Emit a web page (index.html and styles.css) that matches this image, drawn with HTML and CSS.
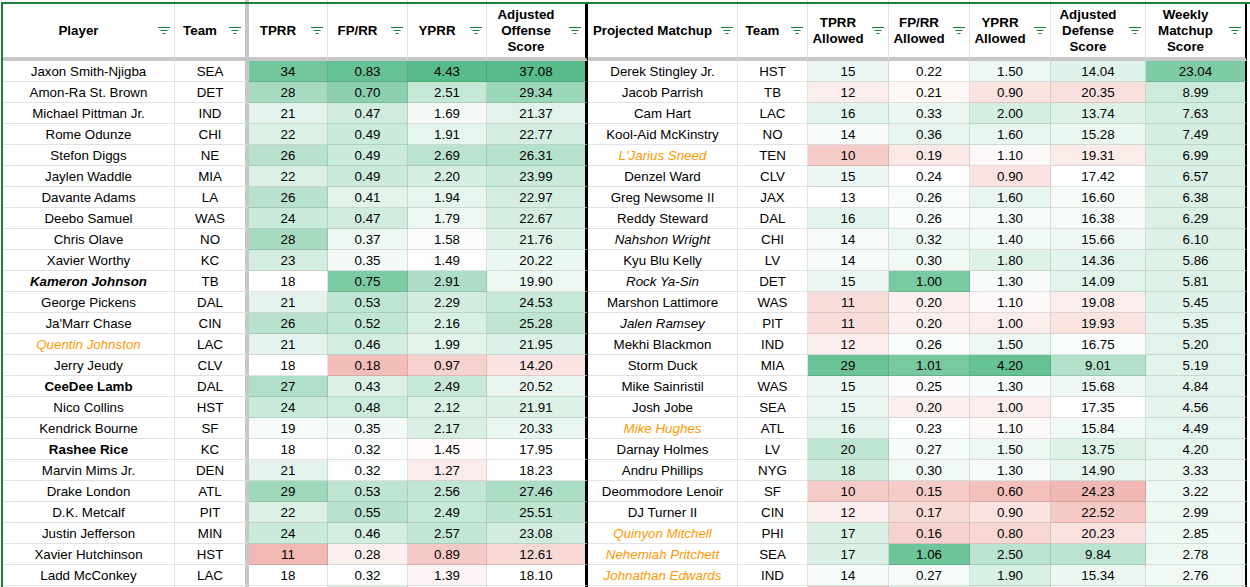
FILE: index.html
```html
<!DOCTYPE html>
<html lang="en">
<head>
<meta charset="utf-8">
<title>Matchups</title>
<link rel="stylesheet" href="styles.css">
</head>
<body>
<svg width="0" height="0" class="defs" aria-hidden="true">
  <symbol id="flt" viewBox="0 0 12 8">
    <path d="M0 0.5H12M2.5 3.5H9.5M4.5 6.5H7.5" stroke="#188038" stroke-width="1" fill="none"/>
  </symbol>
</svg>
<div class="sheet">
  <div class="row stub"><div></div><div></div><div></div><div></div><div></div><div></div><div></div><div></div><div></div><div></div><div></div><div></div><div></div></div>
  <div class="grid">
    <div class="row head">
      <div class="hc"><span class="lbl">Player</span><svg class="fi"><use href="#flt"/></svg></div>
      <div class="hc"><span class="lbl">Team</span><svg class="fi"><use href="#flt"/></svg></div>
      <div class="hc"><span class="lbl">TPRR</span><svg class="fi"><use href="#flt"/></svg></div>
      <div class="hc"><span class="lbl">FP/RR</span><svg class="fi"><use href="#flt"/></svg></div>
      <div class="hc"><span class="lbl">YPRR</span><svg class="fi"><use href="#flt"/></svg></div>
      <div class="hc"><span class="lbl">Adjusted Offense Score</span><svg class="fi"><use href="#flt"/></svg></div>
      <div class="hc"><span class="lbl">Projected Matchup</span><svg class="fi"><use href="#flt"/></svg></div>
      <div class="hc"><span class="lbl">Team</span><svg class="fi"><use href="#flt"/></svg></div>
      <div class="hc"><span class="lbl">TPRR Allowed</span><svg class="fi"><use href="#flt"/></svg></div>
      <div class="hc"><span class="lbl">FP/RR Allowed</span><svg class="fi"><use href="#flt"/></svg></div>
      <div class="hc"><span class="lbl">YPRR Allowed</span><svg class="fi"><use href="#flt"/></svg></div>
      <div class="hc"><span class="lbl">Adjusted Defense Score</span><svg class="fi"><use href="#flt"/></svg></div>
      <div class="hc"><span class="lbl">Weekly Matchup Score</span><svg class="fi"><use href="#flt"/></svg></div>
    </div>

    <div class="row data"><div>Jaxon Smith-Njigba</div><div>SEA</div><div>34</div><div>0.83</div><div>4.43</div><div>37.08</div><div>Derek Stingley Jr.</div><div>HST</div><div>15</div><div>0.22</div><div>1.50</div><div>14.04</div><div>23.04</div></div>
    <div class="row data"><div>Amon-Ra St. Brown</div><div>DET</div><div>28</div><div>0.70</div><div>2.51</div><div>29.34</div><div>Jacob Parrish</div><div>TB</div><div>12</div><div>0.21</div><div>0.90</div><div>20.35</div><div>8.99</div></div>
    <div class="row data"><div>Michael Pittman Jr.</div><div>IND</div><div>21</div><div>0.47</div><div>1.69</div><div>21.37</div><div>Cam Hart</div><div>LAC</div><div>16</div><div>0.33</div><div>2.00</div><div>13.74</div><div>7.63</div></div>
    <div class="row data"><div>Rome Odunze</div><div>CHI</div><div>22</div><div>0.49</div><div>1.91</div><div>22.77</div><div>Kool-Aid McKinstry</div><div>NO</div><div>14</div><div>0.36</div><div>1.60</div><div>15.28</div><div>7.49</div></div>
    <div class="row data"><div>Stefon Diggs</div><div>NE</div><div>26</div><div>0.49</div><div>2.69</div><div>26.31</div><div class="oi">L'Jarius Sneed</div><div>TEN</div><div>10</div><div>0.19</div><div>1.10</div><div>19.31</div><div>6.99</div></div>
    <div class="row data"><div>Jaylen Waddle</div><div>MIA</div><div>22</div><div>0.49</div><div>2.20</div><div>23.99</div><div>Denzel Ward</div><div>CLV</div><div>15</div><div>0.24</div><div>0.90</div><div>17.42</div><div>6.57</div></div>
    <div class="row data"><div>Davante Adams</div><div>LA</div><div>26</div><div>0.41</div><div>1.94</div><div>22.97</div><div>Greg Newsome II</div><div>JAX</div><div>13</div><div>0.26</div><div>1.60</div><div>16.60</div><div>6.38</div></div>
    <div class="row data"><div>Deebo Samuel</div><div>WAS</div><div>24</div><div>0.47</div><div>1.79</div><div>22.67</div><div>Reddy Steward</div><div>DAL</div><div>16</div><div>0.26</div><div>1.30</div><div>16.38</div><div>6.29</div></div>
    <div class="row data"><div>Chris Olave</div><div>NO</div><div>28</div><div>0.37</div><div>1.58</div><div>21.76</div><div class="it">Nahshon Wright</div><div>CHI</div><div>14</div><div>0.32</div><div>1.40</div><div>15.66</div><div>6.10</div></div>
    <div class="row data"><div>Xavier Worthy</div><div>KC</div><div>23</div><div>0.35</div><div>1.49</div><div>20.22</div><div>Kyu Blu Kelly</div><div>LV</div><div>14</div><div>0.30</div><div>1.80</div><div>14.36</div><div>5.86</div></div>
    <div class="row data"><div class="bi">Kameron Johnson</div><div>TB</div><div>18</div><div>0.75</div><div>2.91</div><div>19.90</div><div class="it">Rock Ya-Sin</div><div>DET</div><div>15</div><div>1.00</div><div>1.30</div><div>14.09</div><div>5.81</div></div>
    <div class="row data"><div>George Pickens</div><div>DAL</div><div>21</div><div>0.53</div><div>2.29</div><div>24.53</div><div>Marshon Lattimore</div><div>WAS</div><div>11</div><div>0.20</div><div>1.10</div><div>19.08</div><div>5.45</div></div>
    <div class="row data"><div>Ja'Marr Chase</div><div>CIN</div><div>26</div><div>0.52</div><div>2.16</div><div>25.28</div><div class="it">Jalen Ramsey</div><div>PIT</div><div>11</div><div>0.20</div><div>1.00</div><div>19.93</div><div>5.35</div></div>
    <div class="row data"><div class="oi">Quentin Johnston</div><div>LAC</div><div>21</div><div>0.46</div><div>1.99</div><div>21.95</div><div>Mekhi Blackmon</div><div>IND</div><div>12</div><div>0.26</div><div>1.50</div><div>16.75</div><div>5.20</div></div>
    <div class="row data"><div>Jerry Jeudy</div><div>CLV</div><div>18</div><div>0.18</div><div>0.97</div><div>14.20</div><div>Storm Duck</div><div>MIA</div><div>29</div><div>1.01</div><div>4.20</div><div>9.01</div><div>5.19</div></div>
    <div class="row data"><div class="b">CeeDee Lamb</div><div>DAL</div><div>27</div><div>0.43</div><div>2.49</div><div>20.52</div><div>Mike Sainristil</div><div>WAS</div><div>15</div><div>0.25</div><div>1.30</div><div>15.68</div><div>4.84</div></div>
    <div class="row data"><div>Nico Collins</div><div>HST</div><div>24</div><div>0.48</div><div>2.12</div><div>21.91</div><div>Josh Jobe</div><div>SEA</div><div>15</div><div>0.20</div><div>1.00</div><div>17.35</div><div>4.56</div></div>
    <div class="row data"><div>Kendrick Bourne</div><div>SF</div><div>19</div><div>0.35</div><div>2.17</div><div>20.33</div><div class="oi">Mike Hughes</div><div>ATL</div><div>16</div><div>0.23</div><div>1.10</div><div>15.84</div><div>4.49</div></div>
    <div class="row data"><div class="b">Rashee Rice</div><div>KC</div><div>18</div><div>0.32</div><div>1.45</div><div>17.95</div><div>Darnay Holmes</div><div>LV</div><div>20</div><div>0.27</div><div>1.50</div><div>13.75</div><div>4.20</div></div>
    <div class="row data"><div>Marvin Mims Jr.</div><div>DEN</div><div>21</div><div>0.32</div><div>1.27</div><div>18.23</div><div>Andru Phillips</div><div>NYG</div><div>18</div><div>0.30</div><div>1.30</div><div>14.90</div><div>3.33</div></div>
    <div class="row data"><div>Drake London</div><div>ATL</div><div>29</div><div>0.53</div><div>2.56</div><div>27.46</div><div>Deommodore Lenoir</div><div>SF</div><div>10</div><div>0.15</div><div>0.60</div><div>24.23</div><div>3.22</div></div>
    <div class="row data"><div>D.K. Metcalf</div><div>PIT</div><div>22</div><div>0.55</div><div>2.49</div><div>25.51</div><div>DJ Turner II</div><div>CIN</div><div>12</div><div>0.17</div><div>0.90</div><div>22.52</div><div>2.99</div></div>
    <div class="row data"><div>Justin Jefferson</div><div>MIN</div><div>24</div><div>0.46</div><div>2.57</div><div>23.08</div><div class="oi">Quinyon Mitchell</div><div>PHI</div><div>17</div><div>0.16</div><div>0.80</div><div>20.23</div><div>2.85</div></div>
    <div class="row data"><div>Xavier Hutchinson</div><div>HST</div><div>11</div><div>0.28</div><div>0.89</div><div>12.61</div><div class="oi">Nehemiah Pritchett</div><div>SEA</div><div>17</div><div>1.06</div><div>2.50</div><div>9.84</div><div>2.78</div></div>
    <div class="row data"><div>Ladd McConkey</div><div>LAC</div><div>18</div><div>0.32</div><div>1.39</div><div>18.10</div><div class="oi">Johnathan Edwards</div><div>IND</div><div>14</div><div>0.27</div><div>1.90</div><div>15.34</div><div>2.76</div></div>
    <div class="row tail"><div></div><div></div><div></div><div class="lg"></div><div></div><div></div><div></div><div></div><div class="pk"></div><div class="lg"></div><div class="lg"></div><div></div><div class="lg"></div></div>
  </div>
</div>
<script src="script.js"></script>
</body>
</html>
```

FILE: styles.css
```css
* { box-sizing: border-box; }

html, body {
  margin: 0;
  padding: 0;
  background: #ffffff;
  overflow: hidden;
}

body {
  font-family: "Liberation Sans", Arial, sans-serif;
  font-size: 13.33px;
  color: #000000;
}

.defs {
  position: absolute;
  width: 0;
  height: 0;
}

.sheet {
  width: 1250px;
}

.row {
  display: grid;
  grid-template-columns: 172px 74px 79px 80px 79px 101px 150px 70px 81px 81px 81px 95px 101px;
}

.row > div {
  border-right: 1px solid rgba(0, 0, 0, 0.115);
  border-bottom: 1px solid rgba(0, 0, 0, 0.115);
}

.row > div:nth-child(2) {
  border-right: 4px solid #c7c7c7;
}

.grid .row > div:nth-child(6) {
  border-right: 3px solid #000000;
}

.grid .row > div:nth-child(13) {
  border-right: 2px solid #000000;
}

.stub {
  height: 2px;
  margin-left: 3px;
}

.stub > div {
  height: 2px;
  border-bottom: none;
}

.grid {
  margin-left: 1px;
  border-left: 2px solid #1e7e3c;
  border-top: 2px solid #1e7e3c;
}

.head > .hc {
  height: 57px;
  border-bottom: 4px solid #c7c7c7;
  display: flex;
  align-items: center;
  gap: 4px;
  padding-right: 4px;
  font-weight: bold;
  line-height: 16px;
}

.hc .lbl {
  flex: 1;
  text-align: center;
}

.hc .fi {
  flex: none;
  width: 12px;
  height: 8px;
}

.data > div {
  height: 21px;
  padding-top: 1px;
  line-height: 20px;
  text-align: center;
  white-space: nowrap;
  overflow: hidden;
}

.tail > div {
  height: 21px;
}

.oi {
  color: #ff9900;
  font-style: italic;
}

.it {
  font-style: italic;
}

.bi {
  font-style: italic;
  font-weight: bold;
}

.b {
  font-weight: bold;
}

.lg {
  background: #dcf1e6;
}

.pk {
  background: #f2bdb8;
}
```

FILE: script.js
```js
(function () {
  var GREEN = [87, 187, 138];
  var RED = [230, 124, 115];
  var WHITE = [255, 255, 255];

  var SCALES = {
    2: { min: 5, mid: 18, max: 37 },
    3: { min: 0.05, mid: 0.31, max: 0.88 },
    4: { min: 0, mid: 1.5, max: 4.43 },
    5: { min: 0, mid: 18, max: 37.08 },
    8: { min: 5.5, mid: 13, max: 31 },
    9: { min: 0.045, mid: 0.22, max: 1.2 },
    10: { min: 0, mid: 1.15, max: 4.5 },
    11: { min: -1.5, mid: 17.5, max: 29.7, rev: true },
    12: { min: -30, mid: 0, max: 30 }
  };

  function mix(a, b, t) {
    t = Math.max(0, Math.min(1, t));
    return 'rgb(' + [0, 1, 2].map(function (i) {
      return Math.round(a[i] + (b[i] - a[i]) * t);
    }).join(',') + ')';
  }

  function colour(v, s) {
    var hiCol = s.rev ? RED : GREEN;
    var loCol = s.rev ? GREEN : RED;
    if (v >= s.mid) {
      return mix(WHITE, hiCol, (v - s.mid) / (s.max - s.mid));
    }
    return mix(WHITE, loCol, (s.mid - v) / (s.mid - s.min));
  }

  var rows = document.querySelectorAll('.row.data');
  rows.forEach(function (row) {
    Array.prototype.forEach.call(row.children, function (cell, idx) {
      var s = SCALES[idx];
      if (!s) return;
      var v = parseFloat(cell.textContent);
      if (isNaN(v)) return;
      cell.style.backgroundColor = colour(v, s);
    });
  });
})();
```
